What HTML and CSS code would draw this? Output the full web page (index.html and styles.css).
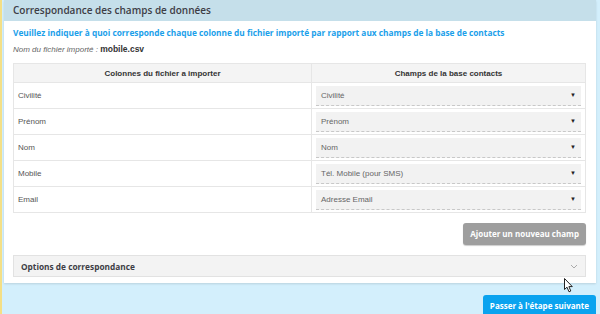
FILE: index.html
```html
<!DOCTYPE html>
<html lang="fr">
<head>
    <meta charset="UTF-8">
    <meta name="viewport" content="width=device-width, initial-scale=1.0">
    <title>Import de contacts</title>
    <link rel="stylesheet" href="styles.css">
</head>
<body>
    <div class="page">
        <div class="panel">
            <div class="panel-heading">Correspondance des champs de données</div>
            <div class="panel-body">
                <p class="intro">Veuillez indiquer à quoi corresponde chaque colonne du fichier importé par rapport aux champs de la base de contacts</p>
                <p class="file-name"><em>Nom du fichier importé :</em> <strong>mobile.csv</strong></p>

                <table class="mapping">
                    <thead>
                        <tr>
                            <th>Colonnes du fichier a importer</th>
                            <th>Champs de la base contacts</th>
                        </tr>
                    </thead>
                    <tbody>
                        <tr>
                            <td>Civilité</td>
                            <td><div class="select">Civilité<span class="caret">▼</span></div></td>
                        </tr>
                        <tr>
                            <td>Prénom</td>
                            <td><div class="select">Prénom<span class="caret">▼</span></div></td>
                        </tr>
                        <tr>
                            <td>Nom</td>
                            <td><div class="select">Nom<span class="caret">▼</span></div></td>
                        </tr>
                        <tr>
                            <td>Mobile</td>
                            <td><div class="select">Tél. Mobile (pour SMS)<span class="caret">▼</span></div></td>
                        </tr>
                        <tr>
                            <td>Email</td>
                            <td><div class="select">Adresse Email<span class="caret">▼</span></div></td>
                        </tr>
                    </tbody>
                </table>

                <div class="actions">
                    <a href="#" class="btn btn-grey">Ajouter un nouveau champ</a>
                </div>

                <div class="options">
                    <span>Options de correspondance</span>
                    <svg class="chevron" width="8" height="5" viewBox="0 0 8 5">
                        <path d="M1 1 L4 4 L7 1" fill="none" stroke="#aaa" stroke-width="1"/>
                    </svg>
                </div>
            </div>
        </div>

        <div class="footer-actions">
            <a href="#" class="btn btn-blue">Passer à l'étape suivante</a>
        </div>
    </div>

    <!-- mouse pointer in the screenshot -->
    <svg class="cursor" width="10" height="15" viewBox="0 0 10 15">
        <path d="M0.5 0.5 L0.5 11.5 L3 9.2 L5 13.8 L6.8 13 L4.9 8.6 L8.3 8.6 Z" fill="#fff" stroke="#222" stroke-width="1"/>
    </svg>
</body>
</html>
```

FILE: styles.css
```css
* {
    margin: 0;
    padding: 0;
    box-sizing: border-box;
}

body {
    background: #d3effc;
    font-family: "Liberation Sans", Arial, sans-serif;
    height: 314px;
    overflow: hidden;
}

/* Page wrapper with the yellow strip on the left */
.page {
    border-left: 2px solid #f4df86;
    padding: 0 4px 0 2px;
    min-height: 314px;
}

/* Main panel */
.panel {
    background: #fff;
    box-shadow: 0 1px 2px rgba(0, 0, 0, 0.12);
}

.panel-heading {
    background: #c5dfea;
    height: 21px;
    padding: 3px 9px 0;
    font-family: "Open Sans", sans-serif;
    font-size: 10px;
    font-weight: 600;
    color: #3d3d45;
}

.panel-body {
    padding: 6px 10px 6px 9px;
}

.intro {
    font-family: "Open Sans", sans-serif;
    font-size: 8.3px;
    font-weight: 700;
    color: #1ba0ea;
    line-height: 12px;
}

.file-name {
    margin-top: 4px;
    font-size: 8px;
    line-height: 12px;
    color: #666;
}

.file-name strong {
    color: #333;
    font-size: 8.5px;
}

/* Mapping table */
.mapping {
    margin-top: 7px;
    width: 100%;
    border-collapse: collapse;
    border: 1px solid #e6e6e6;
    font-size: 8px;
}

.mapping th {
    background: #f4f4f4;
    height: 19px;
    font-weight: bold;
    color: #333;
    border-left: 1px solid #e6e6e6;
}

.mapping th:first-child {
    width: 298px;
}

.mapping td {
    height: 26px;
    padding: 0 4px;
    color: #555;
    border-top: 1px solid #e6e6e6;
    border-left: 1px solid #e6e6e6;
}

.select {
    position: relative;
    background: #f2f2f2;
    height: 20px;
    line-height: 19px;
    padding-left: 5px;
    color: #666;
    border-bottom: 1px dashed #c8c8c8;
}

.caret {
    position: absolute;
    right: 5px;
    top: 0;
    font-size: 6px;
    color: #222;
}

/* Buttons */
.actions {
    display: flex;
    justify-content: flex-end;
    margin-top: 10px;
}

.btn {
    display: inline-block;
    text-decoration: none;
    color: #fff;
    font-family: "Open Sans", sans-serif;
    font-weight: 700;
    font-size: 8px;
    border-radius: 3px;
}

.btn-grey {
    background: #9e9e9e;
    height: 22px;
    line-height: 21px;
    padding: 0 7px;
    box-shadow: 0 1px 1px rgba(0, 0, 0, 0.2);
}

.btn-blue {
    background: #0aa3ef;
    height: 24px;
    line-height: 21px;
    padding: 0 7px;
}

/* Collapsible options bar */
.options {
    margin-top: 10px;
    display: flex;
    justify-content: space-between;
    align-items: center;
    height: 22px;
    padding: 0 7px;
    background: #f3f3f3;
    border: 1px solid #e2e2e2;
    font-family: "Open Sans", sans-serif;
    font-size: 8.3px;
    font-weight: 700;
    color: #3d3d45;
}

.footer-actions {
    display: flex;
    justify-content: flex-end;
    margin-top: 12px;
}

.cursor {
    position: absolute;
    left: 564px;
    top: 278px;
}
```
